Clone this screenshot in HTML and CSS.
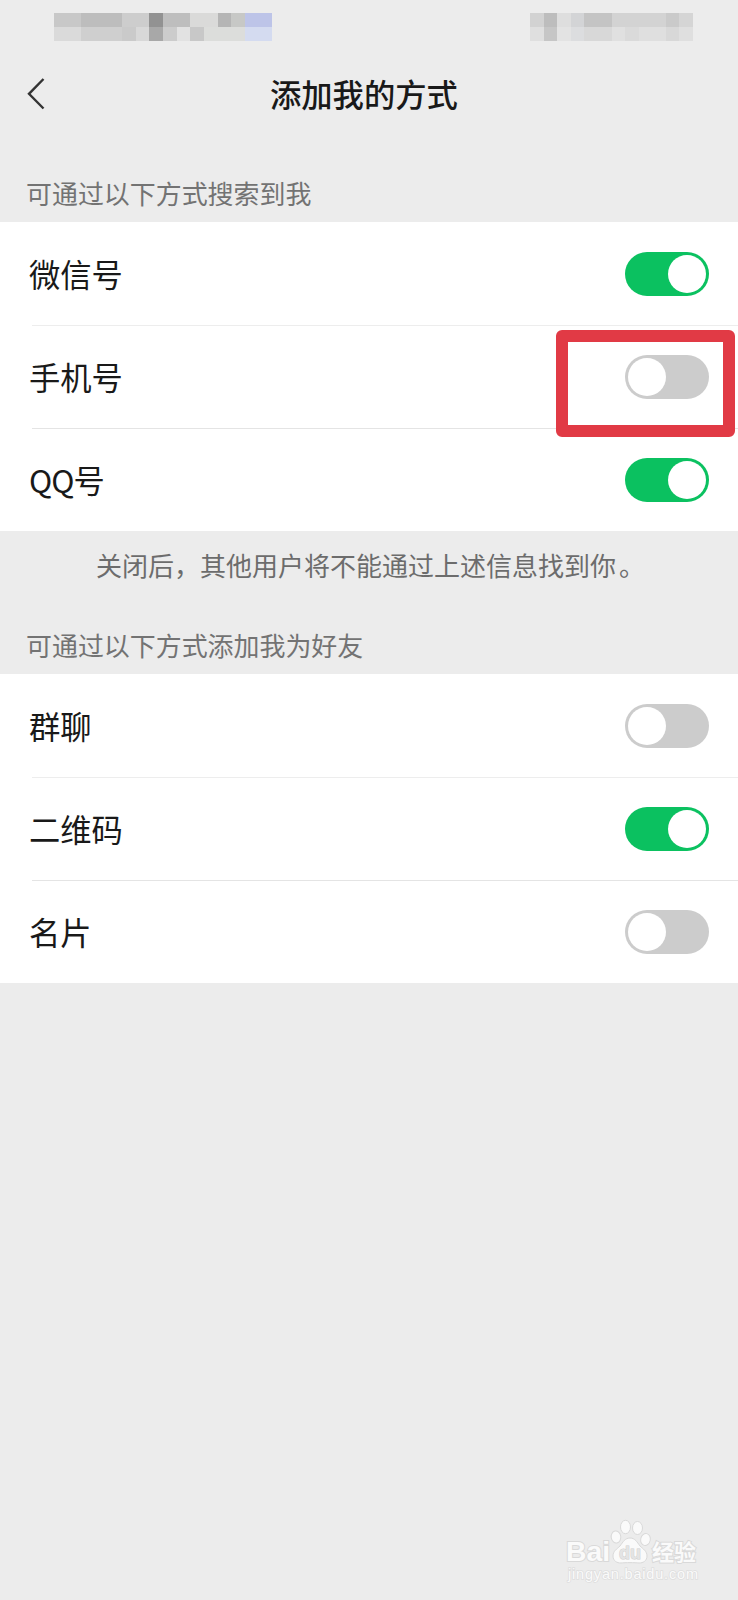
FILE: index.html
```html
<!DOCTYPE html>
<html lang="zh-CN">
<head>
	<meta charset="utf-8">
	<title>添加我的方式</title>
	<link rel="stylesheet" href="styles.css">
</head>
<body>

<div class="status">
	<svg width="218" height="28" viewBox="0 0 16 2" preserveAspectRatio="none" shape-rendering="crispEdges">
		<path fill="#c8c8c8" d="M0 0h2v1H0z"/>
		<path fill="#bdbdbd" d="M2 0h3v1H2z"/>
		<path fill="#cdcdcd" d="M5 0h2v1H5z"/>
		<path fill="#929292" d="M7 0h1v1H7z"/>
		<path fill="#bebebe" d="M8 0h2v1H8z"/>
		<path fill="#dadad9" d="M10 0h2v1h-2z"/>
		<path fill="#b5b5b5" d="M12 0h1v1h-1z"/>
		<path fill="#c7c8c6" d="M13 0h1v1h-1z"/>
		<path fill="#bdc4e8" d="M14 0h2v1h-2z"/>
		<path fill="#dadada" d="M0 1h2v1H0z"/>
		<path fill="#cfcfcf" d="M2 1h3v1H2z"/>
		<path fill="#cacaca" d="M5 1h1v1H5z"/>
		<path fill="#d8d8d8" d="M6 1h1v1H6z"/>
		<path fill="#a8a8a8" d="M7 1h1v1H7z"/>
		<path fill="#cccccc" d="M8 1h1v1H8z"/>
		<path fill="#e2e2e2" d="M9 1h1v1H9z"/>
		<path fill="#c8c8c8" d="M10 1h1v1h-1z"/>
		<path fill="#dcdddb" d="M11 1h3v1h-3z"/>
		<path fill="#d4dbf0" d="M14 1h2v1h-2z"/>
	</svg>
	<svg width="163" height="28" viewBox="0 0 12 2" preserveAspectRatio="none" shape-rendering="crispEdges">
		<path fill="#d2d2d2" d="M0 0h1v1H0z"/>
		<path fill="#bdbdbd" d="M1 0h1v1H1z"/>
		<path fill="#dedede" d="M2 0h1v1H2z"/>
		<path fill="#d3d4d6" d="M3 0h1v1H3z"/>
		<path fill="#c4c4c4" d="M4 0h2v1H4z"/>
		<path fill="#d3d3d3" d="M6 0h4v1H6z"/>
		<path fill="#cacaca" d="M10 0h1v1h-1z"/>
		<path fill="#d5d5d5" d="M11 0h1v1h-1z"/>
		<path fill="#dfdfdf" d="M0 1h1v1H0z"/>
		<path fill="#c6c6c6" d="M1 1h1v1H1z"/>
		<path fill="#e3e3e3" d="M2 1h1v1H2z"/>
		<path fill="#dcdddf" d="M3 1h1v1H3z"/>
		<path fill="#d8d8d8" d="M4 1h2v1H4z"/>
		<path fill="#e0e0e0" d="M6 1h1v1H6z"/>
		<path fill="#dadada" d="M7 1h1v1H7z"/>
		<path fill="#dfdfdf" d="M8 1h2v1H8z"/>
		<path fill="#d8d8d8" d="M10 1h1v1h-1z"/>
		<path fill="#dfdfdf" d="M11 1h1v1h-1z"/>
	</svg>
</div>

<div class="header">
	<svg class="back" width="20" height="34" viewBox="0 0 20 34"><path d="M17.500 2L3 16.800l14.500 14.700" fill="none" stroke="#333" stroke-width="2.400"/></svg>
	<h1>添加我的方式</h1>
</div>

<h2>可通过以下方式搜索到我</h2>
<div class="list">
	<div class="row"><span>微信号</span><i class="switch on"></i></div>
	<div class="row"><span>手机号</span><i class="switch"></i><div class="mark"></div></div>
	<div class="row"><span><b>QQ</b>号</span><i class="switch on"></i></div>
</div>
<p class="tip">关闭后，其他用户将不能通过上述信息找到你<span>。</span></p>

<h2 class="second">可通过以下方式添加我为好友</h2>
<div class="list">
	<div class="row"><span>群聊</span><i class="switch"></i></div>
	<div class="row"><span>二维码</span><i class="switch on"></i></div>
	<div class="row"><span>名片</span><i class="switch"></i></div>
</div>

<div class="watermark">
	<svg width="145" height="80" viewBox="0 0 145 80">
		<g fill="#fafafa" stroke="#d9d9d9" stroke-width="1">
			<ellipse cx="55" cy="27" rx="4.800" ry="6" transform="rotate(-10 55 27)"/>
			<ellipse cx="64.500" cy="17" rx="5" ry="6.700"/>
			<ellipse cx="76.500" cy="18" rx="5" ry="6.500"/>
			<ellipse cx="84.500" cy="29.500" rx="4.800" ry="6" transform="rotate(12 84.500 29.500)"/>
			<path d="M69 28c-5 0-7 4-10 8-3 3-7 5-7 10 0 5 4 7 8 7 4-.5 14-.5 18 0 4 0 8-2 8-7s-4-7-7-10c-3-4-5-8-10-8z"/>
		</g>
		<g class="logo">
			<text x="5" y="51" font-size="28.500" textLength="44" lengthAdjust="spacingAndGlyphs">Bai</text>
			<text class="du" x="58" y="49" font-size="19" textLength="22" lengthAdjust="spacingAndGlyphs">du</text>
			<text class="cn" x="91" y="50" font-size="22" textLength="44" lengthAdjust="spacingAndGlyphs">经验</text>
		</g>
		<text class="url" x="7" y="69" font-size="14.500" textLength="130">jingyan.baidu.com</text>
	</svg>
</div>

</body>
</html>
```
FILE: styles.css
```css
body {
	margin: 0;
	height: 1600px;
	position: relative;
	overflow: hidden;
	background: #ececec;
	color: #191919;
	font-family: "Noto Sans CJK SC", sans-serif;
}
h1, h2, p {margin: 0; font-weight: 400;}

.status {
	display: flex;
	justify-content: space-between;
	height: 41px;
	padding: 13px 45px 0 54px;
	box-sizing: border-box;
}

.header {
	display: flex;
	align-items: center;
	height: 106px;
	padding-left: 26px;
}
.header h1 {
	margin: -1px 0 0 224px;
	font-size: 31.3px;
	font-weight: 500;
	line-height: 46px;
}

h2 {
	height: 75px;
	padding-left: 26px;
	box-sizing: border-box;
	padding-top: 26px;
	font-size: 25.95px;
	line-height: 40px;
	color: #737373;
}
h2.second {
	height: 67px;
	padding-top: 18px;
}
.tip {
	height: 76px;
	padding-top: 14px;
	box-sizing: border-box;
	padding-left: 96px;
	font-size: 26px;
	line-height: 40px;
	white-space: nowrap;
	color: #6c6c6c;
}
.tip span {margin-left: 3px;}

.list {background: #fff;}
.row {
	position: relative;
	display: flex;
	align-items: center;
	justify-content: space-between;
	height: 103px;
	padding: 0 29px;
	font-size: 31.3px;
	line-height: 46px;
}
.row > span {padding-top: 1px;}
.row b {
	font-weight: 400;
	letter-spacing: -1px;
}
.row + .row {
	background: linear-gradient(#ededed, #ededed) 32px 0 / 100% 1px no-repeat;
}
.row + .row + .row {
	background-image: linear-gradient(#e4e4e4, #e4e4e4);
}

.switch {
	width: 84px;
	height: 44px;
	padding: 3px;
	box-sizing: border-box;
	border-radius: 22px;
	background: #ccc;
}
.switch:before {
	content: "";
	display: block;
	width: 38px;
	height: 38px;
	border-radius: 50%;
	background: #fff;
}
.switch.on {background: #0bc160;}
.switch.on:before {margin-left: auto;}

/* red frame around the phone number switch */
.mark {
	position: absolute;
	left: 556px;
	top: 5px;
	width: 179px;
	height: 107px;
	box-sizing: border-box;
	border: 12px solid #e13a45;
	border-radius: 6px;
	z-index: 1;
}

.watermark {
	position: absolute;
	left: 561px;
	top: 1510px;
}
.logo text {
	font-family: "Liberation Sans", sans-serif;
	font-weight: bold;
	fill: #fafafa;
	stroke: #d9d9d9;
	stroke-width: 2px;
	paint-order: stroke;
}
.logo .du {
	fill: #e4e4e4;
	stroke: #cfcfcf;
	stroke-width: 1px;
}
.logo .cn {font-family: "Noto Sans CJK SC", sans-serif;}
.url {
	font-family: "Liberation Sans", sans-serif;
	fill: #fafafa;
	stroke: #dedede;
	stroke-width: 1.5px;
	paint-order: stroke;
}
```
